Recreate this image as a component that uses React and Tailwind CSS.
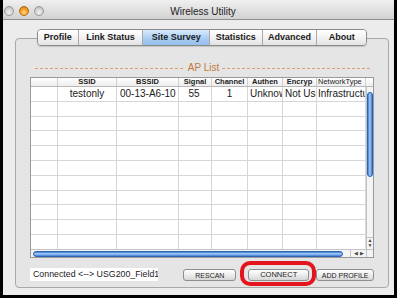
import React from "react";

const columns = [
  { label: "", width: "w-[27px]", head: "justify-center", cell: "justify-center" },
  { label: "SSID", width: "w-[59px]", head: "justify-center", cell: "justify-center" },
  { label: "BSSID", width: "w-[62px]", head: "justify-center", cell: "justify-start pl-[3px]" },
  { label: "Signal", width: "w-[33px]", head: "justify-center", cell: "justify-center pr-[2px]" },
  { label: "Channel", width: "w-[36px]", head: "justify-center", cell: "justify-center" },
  { label: "Authen", width: "w-[35px]", head: "justify-center", cell: "justify-start pl-[2px]" },
  { label: "Encryp", width: "w-[34px]", head: "justify-center", cell: "justify-start pl-[2px]" },
  { label: "NetworkType", width: "w-[49px]", head: "justify-start pl-[1px] font-normal", cell: "justify-start pl-[1px]" },
];

const rows = [
  ["", "testonly", "00-13-A6-10", "55", "1", "Unknown", "Not Used", "Infrastructure"],
  ["", "", "", "", "", "", "", ""],
  ["", "", "", "", "", "", "", ""],
  ["", "", "", "", "", "", "", ""],
  ["", "", "", "", "", "", "", ""],
  ["", "", "", "", "", "", "", ""],
  ["", "", "", "", "", "", "", ""],
  ["", "", "", "", "", "", "", ""],
  ["", "", "", "", "", "", "", ""],
  ["", "", "", "", "", "", "", ""],
  ["", "", "", "", "", "", "", ""],
  ["", "", "", "", "", "", "", ""],
];

const tabs = [
  { label: "Profile", width: "w-[41px]" },
  { label: "Link Status", width: "w-[65px]" },
  { label: "Site Survey", width: "w-[67px]", active: true },
  { label: "Statistics", width: "w-[53px]" },
  { label: "Advanced", width: "w-[55px]" },
  { label: "About", width: "w-[49px]" },
];

const TrafficLight = ({ color }) => (
  <div
    className={
      color === "orange"
        ? "w-[10px] h-[10px] rounded-full border border-[#b06a10] bg-[radial-gradient(circle_at_50%_70%,#ffd27a,#f09a20_60%,#c06a10)]"
        : "w-[10px] h-[10px] rounded-full border border-[#9a9a9a] bg-[radial-gradient(circle_at_50%_70%,#f4f4f4,#cfcfcf_60%,#a8a8a8)]"
    }
  />
);

const App = () => {
  return (
    <div className="w-[401px] h-[298px] bg-white font-['Liberation_Sans',Arial,sans-serif] text-[#1a1a1a]">
      <div className="w-[397px] h-[298px] border-x-[3px] border-b-[3px] border-black bg-[#ececec] flex flex-col">
        {/* title bar */}
        <div className="h-[20px] shrink-0 grid grid-cols-[1fr_auto_1fr] items-center pt-[3px] border-b border-[#8f8f8f] bg-[linear-gradient(to_bottom,#f0f0f0,#d2d2d2)]">
          <div className="flex items-center gap-[5px] pl-[1px]">
            <TrafficLight />
            <TrafficLight color="orange" />
            <TrafficLight />
          </div>
          <div className="pl-[9px] text-[10px] text-[#222]">Wireless Utility</div>
          <div />
        </div>

        {/* tabs */}
        <div className="relative z-10 mt-[9px] ml-[34px] w-[330px] h-[17px] flex rounded-[4px] border border-[#8a8a8a] overflow-hidden shadow-[0_1px_1px_rgba(0,0,0,0.15)]">
          {tabs.map((tab, i) => (
            <div
              key={tab.label}
              className={
                (tab.active
                  ? "bg-[linear-gradient(to_bottom,#d9eafc,#a9cdf2_55%,#94bfee)] "
                  : "bg-[linear-gradient(to_bottom,#ffffff,#f1f1f1_55%,#e2e2e2)] ") +
                tab.width +
                (i < tabs.length - 1 ? " border-r border-[#a9a9a9]" : "") +
                " flex items-center justify-center text-[9px] font-bold text-[#1a1a1a] whitespace-nowrap"
              }
            >
              {tab.label}
            </div>
          ))}
        </div>

        {/* panel */}
        <div className="-mt-[8px] ml-[12px] w-[374px] h-[250px] rounded-[4px] border border-[#a8a8a8] bg-[#e5e5e5] px-[14px] pt-[23px] flex flex-col">
          {/* AP List heading */}
          <div className="h-[12px] flex items-center gap-[3px] ml-[5px] mr-[2px]">
            <div className="flex-1 h-[1px] bg-[repeating-linear-gradient(to_right,#dca078_0_3px,transparent_3px_5px)]" />
            <div className="text-[10px] leading-none text-[#c27a40]">AP List</div>
            <div className="flex-1 h-[1px] bg-[repeating-linear-gradient(to_right,#dca078_0_3px,transparent_3px_5px)]" />
          </div>

          {/* table */}
          <div className="mt-[3px] w-[344px] h-[181px] border border-[#9a9a9a] bg-white flex flex-col overflow-hidden">
            <div className="h-[9px] shrink-0 flex border-b border-[#b8b8b8] bg-[linear-gradient(to_bottom,#ffffff,#eeeeee)]">
              {columns.map((col) => (
                <div
                  key={col.label + col.width}
                  className={col.width + " " + col.head + " flex items-center border-r border-[#cfcfcf] text-[7.5px] leading-none font-bold whitespace-nowrap overflow-hidden"}
                >
                  {col.label}
                </div>
              ))}
              <div className="flex-1" />
            </div>

            <div className="flex-1 flex min-h-0">
              <div className="flex-1 overflow-hidden">
                {rows.map((row, r) => (
                  <div key={r} className="h-[14.8px] flex border-b border-[#d6d6d6]">
                    {columns.map((col, c) => (
                      <div
                        key={c}
                        className={col.width + " " + col.cell + " flex items-center border-r border-[#d6d6d6] text-[10px] leading-none whitespace-nowrap overflow-hidden"}
                      >
                        {row[c]}
                      </div>
                    ))}
                  </div>
                ))}
              </div>

              {/* vertical scrollbar */}
              <div className="w-[7px] bg-[#f4f4f4] border-l border-[#c4c4c4] flex flex-col items-center">
                <div className="mt-[5px] w-[6px] h-[85px] rounded-full border border-[#2d62b4] bg-[linear-gradient(to_right,#3a76cf,#a9cff6_45%,#7cb2ee_65%,#3a76cf)]" />
                <div className="flex-1" />
                <div className="w-full flex flex-col items-center border-t border-[#c4c4c4] text-[5px] leading-[5px] text-[#444] pb-[1px]">
                  <span>▲</span>
                  <span>▼</span>
                </div>
              </div>
            </div>

            {/* horizontal scrollbar */}
            <div className="h-[8px] shrink-0 flex border-t border-[#c4c4c4] bg-[#f4f4f4]">
              <div className="flex-1 flex items-center pl-[2px] pr-[7px]">
                <div className="w-[310px] h-[6px] rounded-full border border-[#2d62b4] bg-[linear-gradient(to_bottom,#3a76cf,#a9cff6_45%,#7cb2ee_65%,#3a76cf)]" />
              </div>
              <div className="w-[16px] flex items-center justify-center gap-[2px] border-l border-[#c4c4c4] text-[5px] leading-none text-[#444]">
                <span>◀</span>
                <span>▶</span>
              </div>
              <div className="w-[7px] border-l border-[#c4c4c4]" />
            </div>
          </div>

          {/* bottom row */}
          <div className="mt-[10px] flex items-start">
            <div className="w-[129px] h-[13px] bg-white pl-[3px] flex items-center text-[8.8px] whitespace-nowrap overflow-hidden">
              Connected &lt;--&gt; USG200_Field1
            </div>
            <button className="ml-[25px] w-[53px] h-[12px] mt-[1px] rounded-[3px] border border-[#8e8e8e] bg-[linear-gradient(to_bottom,#ffffff,#ececec_50%,#d6d6d6)] text-[7px] leading-none text-[#222]">
              RESCAN
            </button>
            <div className="relative ml-[12px] mt-[1px] flex">
              <button className="w-[61px] h-[12px] rounded-[3px] border border-[#8e8e8e] bg-[linear-gradient(to_bottom,#ffffff,#ececec_50%,#d6d6d6)] text-[7.5px] leading-none text-[#222]">
                CONNECT
              </button>
              <div className="absolute -left-[8px] -right-[7px] -top-[8px] -bottom-[5px] rounded-[10px] border-[4px] border-[#e3141b]" />
            </div>
            <button className="ml-[7px] w-[58px] h-[12px] mt-[1px] rounded-[3px] border border-[#8e8e8e] bg-[linear-gradient(to_bottom,#ffffff,#ececec_50%,#d6d6d6)] text-[7px] leading-none text-[#222] whitespace-nowrap">
              ADD PROFILE
            </button>
          </div>
        </div>
      </div>
    </div>
  );
};

export default App;
